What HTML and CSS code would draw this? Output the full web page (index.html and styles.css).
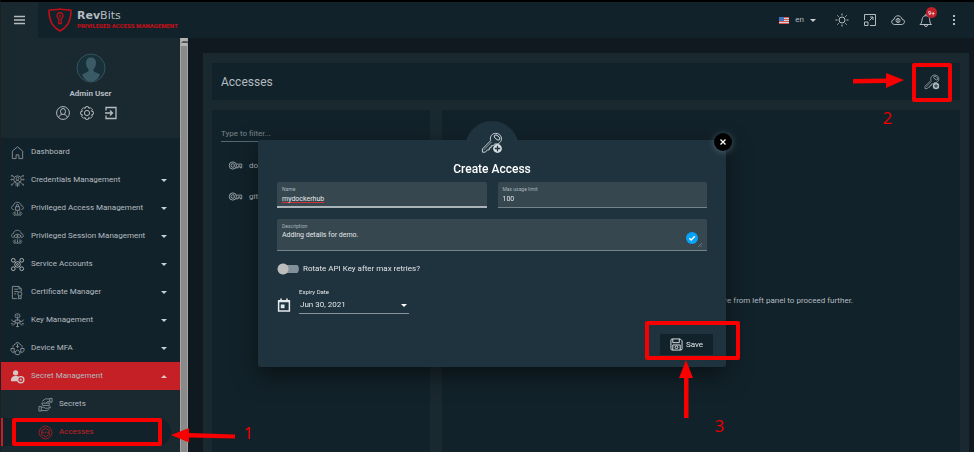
FILE: index.html
```html
<!DOCTYPE html>
<html lang="en">
<head>
<meta charset="utf-8">
<title>RevBits Privileged Access Management</title>
<link rel="stylesheet" href="styles.css">
</head>
<body>
<svg class="defs" aria-hidden="true">
  <symbol id="key-add" viewBox="0 0 24 24">
    <path d="M10.5 9.5C9.3 5 12 1.5 16 1.5c4 0 6.5 3 6.3 6.300-.3 3.500-3.300 5.700-7.300 5.200L13.200 15h-2.200v2.200H9v2.300H6.800l-2 2.500H1.500v-3.500z" fill="none" stroke="currentColor"/>
    <ellipse cx="17.500" cy="6" rx="3.600" ry="2" transform="rotate(40 17.500 6)" fill="none" stroke="currentColor"/>
    <path d="M3 19.500 11.500 11" stroke="currentColor" stroke-width=".7"/>
    <circle cx="18" cy="18" r="4.800" fill="currentColor"/>
    <path d="M18 15v6M15 18h6" stroke="#1f333e" stroke-width="1.400"/>
  </symbol>
  <symbol id="key" viewBox="0 0 16 10">
    <g fill="none" stroke="currentColor" stroke-width=".9"><circle cx="5" cy="5" r="4"/><circle cx="5" cy="5" r="2"/><path d="M5 5h.5M9 3.500h6v4h-2v-2h-2v2H8.500"/></g>
  </symbol>
  <symbol id="cloud" viewBox="0 0 16 16">
    <path d="M4.500 9H3.500C.8 8.500 1 5.300 3.600 5 4 1.800 7 .8 9 1.500c1.800.5 2.800 1.800 2.900 3.500 3 .2 3.200 3.700.6 4h-1M5.500 12v1.500M8 11v3M10.500 12v1.500M3 13.500l2.500-2.500M13 13.500 10.500 11" fill="none" stroke="currentColor" stroke-width=".9"/>
    <g fill="none" stroke="currentColor" stroke-width=".8"><circle cx="5" cy="14.500" r="1"/><circle cx="8" cy="14.800" r="1"/><circle cx="11" cy="14.500" r="1"/></g>
  </symbol>
</svg>

<div class="app">
  <header class="topbar">
    <button class="menu-btn" aria-label="Toggle menu"><svg viewBox="0 0 12 10"><path d="M0 1.500h11M0 5h11M0 8.500h11" stroke="currentColor" stroke-width="1.300"/></svg></button>
    <a class="brand" href="#">
      <svg class="brand-mark" viewBox="0 0 24 24"><path d="M12 1C9 2 5 1.700 1 2.300.8 12.500 4 19 12 23c8-4 11.200-10.500 11-20.700C19 1.700 15 2 12 1z" fill="none" stroke="#c00f19" stroke-width="1.500"/><path d="M10.800 10.500a3 3 0 1 1 2.400 0v5.200h-2.400z" fill="none" stroke="#c00f19" stroke-width="1.300"/><circle cx="12" cy="8" r="1" fill="#c00f19"/></svg>
      <span class="brand-text"><span class="brand-name"><b>Rev</b>Bits</span><span class="brand-sub">PRIVILEGED ACCESS MANAGEMENT</span></span>
    </a>
    <div class="tools">
      <button class="lang"><svg class="flag" viewBox="0 0 10 7"><path fill="#d7d2d5" d="M0 0h10v7H0z"/><path d="M0 .5h10M0 2.500h10M0 4.500h10M0 6.500h10" stroke="#d4554f"/><path fill="#3f72b8" d="M0 0h5v4H0z"/></svg><span>en</span><i class="caret"></i></button>
      <button class="tool" aria-label="Theme"><svg viewBox="0 0 14 14" fill="none" stroke="currentColor"><circle cx="7" cy="7" r="3"/><path d="M7 .5v2M7 11.500v2M.5 7h2M11.500 7h2M2.400 2.400l1.300 1.300M10.300 10.300l1.300 1.300M2.400 11.600l1.300-1.300M10.300 3.700l1.300-1.300"/></svg></button>
      <button class="tool" aria-label="Full screen"><svg viewBox="0 0 14 14" fill="none" stroke="currentColor"><path d="M1.500 7V1.500h11v11H7M1.500 9h3.500v3.500H1.500zM6.500 7.500 10 4M7 4h3v3"/></svg></button>
      <button class="tool" aria-label="Cloud"><svg viewBox="0 0 14 14" fill="none" stroke="currentColor"><path d="M3.500 11.500C-.2 11.300-.1 6.700 3 6.500 3.500 1.700 10 1.500 11 6.200c3.300.3 3.300 5-.3 5.300z"/><circle cx="7" cy="7.500" r="2"/><path d="M7 5.500v4"/></svg></button>
      <button class="tool" aria-label="Notifications"><svg viewBox="0 0 14 14" fill="none" stroke="currentColor"><path d="M1 11.500h11.500C10.500 10 11 8 10.500 5.500 10 1.800 4 1.800 3.300 5.500 2.800 8 3 10 1 11.500zM5.500 12a1.500 1.500 0 0 0 3 0M6 2.500a1 1 0 0 1 2 0"/></svg><span class="badge">9+</span></button>
      <button class="tool" aria-label="More"><svg viewBox="0 0 14 14" fill="currentColor"><path d="M6 2h2v2H6zM6 6h2v2H6zM6 10h2v2H6z"/></svg></button>
    </div>
  </header>

  <aside class="sidebar">
    <div class="side-body">
      <section class="profile">
        <svg class="avatar" viewBox="0 0 30 30"><circle cx="15" cy="15" r="14" fill="#18303a" stroke="#34535e"/><path d="M15 4.500c-3 0-5 1.800-5 5.500 0 3 1 4.700 2.500 6.200.3 1.300 0 2-.8 2.500L6 21.500C8 26 11 28.500 15 28.500s7-2.500 9-7l-5.700-2.800c-.8-.5-1-1.200-.8-2.500C19 14.700 20 13 20 10c0-3.700-2-5.500-5-5.500z" fill="#3a5a65"/></svg>
        <strong>Admin User</strong>
        <div class="profile-actions">
          <button aria-label="Profile"><svg viewBox="0 0 14 14" fill="none" stroke="currentColor"><circle cx="7" cy="7" r="6.400"/><ellipse cx="7" cy="5.500" rx="2.500" ry="3"/><path d="M2.800 11.500c.2-2 1.300-2.500 3-3M11.200 11.500c-.2-2-1.300-2.500-3-3"/></svg></button>
          <button aria-label="Settings"><svg viewBox="0 0 14 14" fill="none" stroke="currentColor"><circle cx="7" cy="7" r="2.600"/><path d="M5.700.7h2.600l.5 1.600 1.500-.7 2 2-.8 1.600 1.800.5v2.600l-1.700.5.7 1.600-1.900 1.900-1.600-.7-.5 1.700H5.700l-.5-1.700-1.600.7-1.900-1.900.7-1.600-1.700-.5V5.700l1.700-.5-.7-1.600 1.900-1.900 1.600.7z"/></svg></button>
          <button aria-label="Log out"><svg viewBox="0 0 14 14" fill="none" stroke="currentColor" stroke-width="1.300"><path d="M2 4.500v-3h10v11H2v-3M1 7h7M6 4.500 8.500 7 6 9.500"/></svg></button>
        </div>
      </section>
      <nav class="nav">
        <a href="#"><svg viewBox="0 0 16 16" fill="none" stroke="currentColor"><path d="M2.500 14.500v-8L8 2l5.500 4.500v8H9.500v-4h-3v4z"/></svg><span>Dashboard</span></a>
        <a href="#"><svg viewBox="0 0 16 16" fill="none" stroke="currentColor" stroke-width=".9"><circle cx="8" cy="7" r="4"/><circle cx="8" cy="6" r="1.500"/><path d="M5.500 9.500c1-2 4-2 5 0M4 7H2M12 7h2M4.500 4.500 2.500 3M11.500 4.500l2-1.500M4.500 10l-2 2M11.500 10l2 2M6.500 11v3M9.500 11v3M8 11v4"/><circle cx="2" cy="3" r=".6"/><circle cx="14" cy="3" r=".6"/><circle cx="1.500" cy="7" r=".6"/><circle cx="14.500" cy="7" r=".6"/><circle cx="2" cy="12.500" r=".6"/><circle cx="14" cy="12.500" r=".6"/></svg><span>Credentials Management</span><i class="caret"></i></a>
        <a href="#"><svg viewBox="0 0 16 16"><use href="#cloud"/><path d="M6 6h4v4H6zM7 6V4.500a1 1 0 0 1 2 0V6" fill="none" stroke="currentColor"/></svg><span>Privileged Access Management</span><i class="caret"></i></a>
        <a href="#"><svg viewBox="0 0 16 16"><use href="#cloud"/><path d="M4 7.500q4-4 8 0-4 4-8 0z" fill="none" stroke="currentColor"/><circle cx="8" cy="7.500" r="1" fill="currentColor"/></svg><span>Privileged Session Management</span><i class="caret"></i></a>
        <a href="#"><svg class="strong" viewBox="0 0 16 16" fill="none" stroke="currentColor"><circle cx="8" cy="8" r="3"/><circle cx="8" cy="8" r="1"/><circle cx="3.500" cy="3.500" r="2"/><circle cx="12.500" cy="3.500" r="2"/><circle cx="3.500" cy="12.500" r="2"/><circle cx="12.500" cy="12.500" r="2"/><path d="M5 5l1 1M11 5l-1 1M5 11l1-1M11 11l-1-1"/></svg><span>Service Accounts</span><i class="caret"></i></a>
        <a href="#"><svg viewBox="0 0 16 16" fill="none" stroke="currentColor"><path d="M7.500 14.500h-5v-13h7l2.500 2.500v3M4.500 4.500h4M4.500 7H9M4.500 9.500h2M9.500 1.500V4H12"/><circle cx="10.500" cy="9.500" r="2.200"/><path d="M9.200 11.500v3.500l1.300-.8 1.300.8v-3.500"/></svg><span>Certificate Manager</span><i class="caret"></i></a>
        <a href="#"><svg viewBox="0 0 16 16" fill="none" stroke="currentColor"><rect x="5.500" y="1" width="5" height="4" rx="1.500"/><path d="M7 3h2M8 5v3M5.500 7.500h5v3h-5zM5.500 9H3L1.500 7M10.500 9H13l1.500-2M6 10.500l-3 3M10 10.500l3 3M8 10.500v4M1 11.500h2.500M12.500 11.500H15M6.500 14.500h3"/></svg><span>Key Management</span><i class="caret"></i></a>
        <a href="#"><svg viewBox="0 0 16 16" fill="none" stroke="currentColor"><path d="M6 3.500a2 2 0 1 1 4 0M5.500 3.500C3.500 4 3 5.500 3 7M10.500 3.500C12.500 4 13 5.500 13 7M1 8h3.500v4H2.500L1 10zM15 8h-3.500v4h2l1.500-2zM5.500 14v-2.500l2.500-2 2.500 2V14M8 3v4M6.500 5.500 8 7l1.500-1.500M6 14.500h4"/></svg><span>Device MFA</span><i class="caret"></i></a>
        <a class="open" href="#"><svg viewBox="0 0 16 16"><circle cx="6" cy="4" r="2.800" fill="currentColor"/><path d="M1 13c0-4 1.500-5.500 5-5.500 2 0 3 .3 3.800 1.500L8 13z" fill="currentColor"/><circle cx="11.500" cy="11.500" r="3.300" fill="#c42025" stroke="currentColor" stroke-width="1.400"/><path d="M10 11.500h3M11.500 10v3" stroke="currentColor" stroke-width=".8"/></svg><span>Secret Management</span><i class="caret up"></i></a>
        <div class="sub">
          <a href="#"><svg viewBox="0 0 16 16" fill="none" stroke="currentColor"><path d="M1 10h2.500v5H1zM3.500 11H6l2 1h3M3.500 14.500H10l3.500-4-2.500.5M15 1.500v4h-2.500v-4zM12.500 2H8L4.500 4.500M12.500 5H10L8.500 6.500M4 6.500h8v2.500H5z"/></svg><span>Secrets</span></a>
          <a class="current" href="#"><svg viewBox="0 0 16 16" fill="none" stroke="currentColor"><path d="M5 2 8 1l3 1 2.500 2L15 8l-1.500 4-2.500 2-3 1-3-1-2.500-2L1 8l1.500-4z"/><path d="M8 3.500l4 2.300v4.500L8 12.500l-4-2.200V5.800z"/><path d="M4.500 8h1.500M7.200 8h1.500M10 8h1.500" stroke-width="1.500"/></svg><span>Accesses</span></a>
        </div>
      </nav>
    </div>
    <div class="scroll-track"><i></i></div>
  </aside>

  <main class="content">
    <div class="board">
      <div class="card title-card">
        <h1>Accesses</h1>
        <button class="add" aria-label="Add access"><svg viewBox="0 0 24 24"><use href="#key-add"/></svg></button>
      </div>
      <div class="columns">
        <section class="card list">
          <input type="text" placeholder="Type to filter..." aria-label="Type to filter">
          <ul>
            <li><svg viewBox="0 0 16 10"><use href="#key"/></svg>dockerhub</li>
            <li><svg viewBox="0 0 16 10"><use href="#key"/></svg>github</li>
          </ul>
        </section>
        <section class="card detail"><p>Please select an access entry or create a new one here from left panel to proceed further.</p></section>
      </div>
    </div>
  </main>
</div>

<div class="overlay">
  <form class="modal" role="dialog" aria-labelledby="modal-title">
    <div class="modal-icon"><svg viewBox="0 0 24 24"><use href="#key-add"/></svg></div>
    <button type="button" class="close" aria-label="Close"><svg viewBox="0 0 8 8"><path d="M2 2l4 4M6 2 2 6" stroke="#fff" stroke-width="1"/></svg></button>
    <h2 id="modal-title">Create Access</h2>
    <div class="row">
      <div class="field focus"><label for="name">Name</label><input id="name" type="text" class="spell" value="mydockerhub" spellcheck="false"></div>
      <div class="field"><label for="limit">Max usage limit</label><input id="limit" type="text" value="100"></div>
    </div>
    <div class="field area"><label for="desc">Description</label><textarea id="desc" spellcheck="false">Adding details for demo.</textarea>
      <svg class="check" viewBox="0 0 12 12"><circle cx="6" cy="6" r="6" fill="#05a3f8"/><path d="M3.300 6.200 5.200 8l3.600-3.800" fill="none" stroke="#fff" stroke-width="1.400"/></svg>
      <svg class="grip" viewBox="0 0 4 4"><path d="M0 4 4 0M2.500 4 4 2.500" stroke="#8b969c" stroke-width=".6"/></svg>
    </div>
    <label class="toggle"><input type="checkbox"><span>Rotate API Key after max retries?</span></label>
    <div class="expiry">
      <svg viewBox="0 0 12 13"><path d="M1 2.500h10v9.500H1z" fill="none" stroke="#e4e8ea" stroke-width="1.400"/><path d="M1 2h10v2H1zM2.500.5H4V2H2.500zM8 .5h1.500V2H8zM3 6h3.500v3.500H3z" fill="#e4e8ea"/></svg>
      <div class="date"><label for="date">Expiry Date</label><div class="select-wrap"><select id="date"><option>Jun 30, 2021</option></select><i class="caret"></i></div></div>
    </div>
    <div class="actions"><button type="button" class="save"><svg viewBox="0 0 14 14" fill="none" stroke="currentColor"><path d="M1 2.500Q1 1 2.500 1H11l2 2v8.500q0 1.500-1.500 1.500h-9Q1 13 1 11.500zM3 1v4h7V1M3 13V7.500h8V13"/><circle cx="7" cy="10" r="1.500"/></svg>Save</button></div>
  </form>
</div>

<svg class="marks" width="974" height="452" viewBox="0 0 974 452">
  <g fill="none" stroke="#f80000" stroke-width="4" stroke-linejoin="round">
    <rect x="14" y="420" width="146" height="24"/>
    <rect x="914" y="65" width="36" height="35"/>
    <rect x="647" y="323" width="91" height="35"/>
  </g>
  <g fill="#f80000">
    <path d="M171 435l18-7v5l46 1.500v4l-46-1v5z"/>
    <path d="M904 80l-18-7v5.500l-33 .5v4.500l33-.5v5z"/>
    <path d="M686 360l-7 18h5v40h4.500v-40h4.500z"/>
    <g class="num"><text x="244" y="439">1</text><text x="883" y="124">2</text><text x="715" y="432">3</text></g>
  </g>
</svg>
</body>
</html>
```

FILE: styles.css
```css
* { box-sizing: border-box; }
body {
  margin: 0;
  height: 100vh;
  overflow: hidden;
  background: #10191f;
  color: #b4bcc0;
  font: 8px/12px Roboto, sans-serif;
}
button, input, select, textarea { font: inherit; color: inherit; background: none; border: 0; padding: 0; margin: 0; outline: 0; }
button { display: flex; align-items: center; justify-content: center; }
a { color: inherit; text-decoration: none; }
svg { display: block; flex: none; }
.defs { position: absolute; width: 0; height: 0; }

.app {
  display: grid;
  grid-template: 36px 1fr / 187px 1fr;
  height: 100vh;
  border-top: 2px solid #000;
  border-left: 1px solid #1d1f20;
}
.topbar { grid-column: 1 / 3; display: flex; background: #12222a; }
.menu-btn { width: 37px; background: #1a2830; }
.menu-btn svg { width: 12px; height: 10px; }
.brand { display: flex; align-items: center; gap: 5px; padding-left: 10px; }
.brand-mark { width: 24px; height: 24px; }
.brand-text { display: flex; flex-direction: column; margin-top: -3px; }
.brand-name { font: 11px/13px "DejaVu Sans", sans-serif; }
.brand-sub { color: #c00f19; font: 900 6px/7px Roboto, sans-serif; }
.tools { margin-left: auto; display: flex; align-items: center; gap: 14px; padding-right: 13px; }
.lang { gap: 6px; margin-right: 5px; }
.flag { width: 10px; height: 7px; }
.tool { position: relative; width: 14px; height: 14px; }
.tool svg { width: 14px; height: 14px; }
.badge {
  position: absolute; top: -6px; right: -4px;
  width: 11px; height: 11px; border-radius: 50%;
  background: #c0202a; color: #fff; font-size: 6px; line-height: 11px; text-align: center;
}
.caret { border: 3px solid transparent; border-top-color: #c8ced1; border-bottom: 0; }
.caret.up { border-top: 0; border-bottom: 3px solid #e0c8c8; }

.sidebar { display: flex; min-height: 0; overflow: hidden; }
.side-body { flex: 1; background: #12222a; }
.profile { display: flex; flex-direction: column; align-items: center; height: 100px; padding-top: 15px; background: #1a2830; }
.avatar { width: 30px; height: 30px; }
.profile strong { margin-top: 5px; font-weight: 700; }
.profile-actions { display: flex; gap: 10px; margin-top: 6px; padding-right: 7px; }
.profile-actions svg { width: 14px; height: 14px; }
.nav a { display: flex; align-items: center; gap: 6px; height: 28px; padding: 0 13px 0 9px; }
.nav svg { width: 15px; height: 15px; color: #839096; }
.nav .strong { color: #aeb7bb; }
.nav .caret { margin-left: auto; }
.nav .open { background: #c42025; }
.nav .open svg { color: #d8c5c7; }
.sub { background: #1a2830; height: 62px; }
.sub a { padding-left: 37px; }
.sub .current { margin-right: 9px; padding-left: 35px; border-left: 2px solid #c42025; border-radius: 0 14px 14px 0; background: #12222a; color: #c42025; }
.sub .current svg { color: #a52026; }
.scroll-track { width: 8px; background: #8a8a8a; border: solid #a5a5a5; border-width: 0 1px; }
.scroll-track i { display: block; height: 8px; background: #b4b4b4; }
.scroll-track i::before { content: ""; display: block; width: 4px; margin: auto; border: 2px solid transparent; border-top-width: 3px; border-bottom-color: #555; }

.content { display: flex; min-width: 0; min-height: 0; padding: 15px 5px 0 15px; }
.board { flex: 1; display: flex; flex-direction: column; gap: 10px; padding: 10px 9px 0; background: #1a2830; }
.card { background: #12222a; }
.title-card { display: flex; align-items: center; justify-content: space-between; height: 37px; padding: 0 20px 0 9px; }
h1 { margin: 0; font-size: 12px; font-weight: 400; }
.add svg { width: 16px; height: 16px; }
.columns { flex: 1; display: grid; grid-template-columns: 218px 1fr; gap: 12px; }
.list { padding: 16px 9px; }
.list input { width: 100%; height: 16px; border-bottom: 1px solid #59666d; }
.list input::placeholder { color: #7b868b; opacity: 1; }
.list ul { margin: 8px 0 0; padding: 0; list-style: none; }
.list li { display: flex; align-items: center; gap: 6px; height: 31px; padding-left: 7px; }
.list li svg { width: 15px; height: 9px; }
.detail { display: grid; place-items: center; padding: 40px 12px 0 0; }
.detail p { margin: 0; white-space: nowrap; }

.overlay { position: fixed; inset: 0; display: flex; justify-content: center; align-items: center; padding: 55px 0 0 10px; }
.modal {
  position: relative; width: 468px; padding: 21px 19px 12px;
  background: #1f333e; border-radius: 3px; box-shadow: 0 8px 24px rgba(0, 0, 0, .5); color: #e3e7e9;
}
.modal-icon {
  position: absolute; left: 50%; top: -19px; margin-left: -27px;
  width: 54px; height: 40px; padding-top: 11px; border-radius: 27px 27px 0 0; background: #1f333e;
}
.modal-icon svg { width: 22px; height: 22px; margin: auto; color: #d8dde0; }
.close { position: absolute; right: -6px; top: -7px; width: 18px; height: 18px; border-radius: 50%; background: #000; box-shadow: 0 1px 6px rgba(120, 150, 170, .5); }
.close svg { width: 10px; height: 10px; }
h2 { position: relative; margin: 0 0 4px; color: #fff; font-size: 12px; line-height: 17px; font-weight: 500; text-align: center; }
.row { display: grid; grid-template-columns: 1fr 1fr; gap: 11px; }
.field { position: relative; display: flex; flex-direction: column; height: 26px; padding: 4px 5px 0; background: #364750; border-radius: 2px 2px 0 0; border-bottom: 1px solid #74828a; font-size: 7px; }
.field.focus { border-bottom: 2px solid #aab3b7; }
.field label { color: #a9b3b8; font-size: 5px; line-height: 7px; }
.field input { height: 11px; }
.spell { text-decoration: underline #d03038 1px; text-decoration-skip-ink: none; }
.area { height: 32px; margin-top: 11px; }
.area textarea { height: 16px; line-height: 10px; resize: none; overflow: hidden; }
.check { position: absolute; right: 9px; bottom: 6px; width: 12px; height: 12px; }
.grip { position: absolute; right: 5px; bottom: 3px; width: 4px; height: 4px; }
.toggle { display: flex; align-items: center; gap: 4px; margin-top: 12px; }
.toggle input { appearance: none; width: 22px; height: 12px; border-radius: 6px; background: radial-gradient(circle at 6px 6px, #bdbdbd 5px, transparent 6px), linear-gradient(#82909a, #82909a) 3px 2px / 19px 8px no-repeat; }
.expiry { display: flex; align-items: flex-end; gap: 8px; margin-top: 12px; }
.expiry > svg { width: 14px; height: 14px; margin-bottom: 2px; }
.date { width: 110px; display: flex; flex-direction: column; }
.date label { font-size: 6px; line-height: 10px; }
.select-wrap { display: flex; align-items: center; border-bottom: 1px solid #87939a; }
.select-wrap select { flex: 1; height: 16px; appearance: none; padding-left: 1px; }
.select-wrap .caret { margin-right: 2px; border-top-color: #fff; }
.actions { display: flex; justify-content: flex-end; margin-top: 20px; }
.save { gap: 3px; width: 53px; height: 21px; margin-right: -6px; background: #12222a; }
.save svg { width: 13px; height: 13px; }

.marks { position: absolute; left: 0; top: 0; pointer-events: none; }
.num { font: 17px "Noto Sans", sans-serif; }
```
